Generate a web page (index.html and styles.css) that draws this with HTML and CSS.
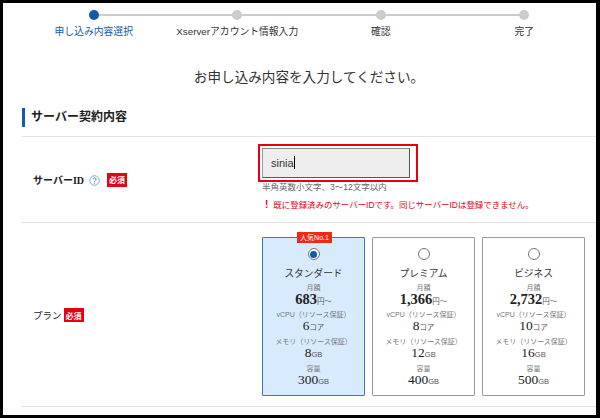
FILE: index.html
```html
<!DOCTYPE html>
<html lang="ja">
<head>
    <meta charset="UTF-8">
    <meta name="viewport" content="width=device-width, initial-scale=1.0">
    <title>お申し込み内容</title>
    <link rel="stylesheet" href="styles.css">
</head>
<body>
    <div class="frame">
        <!-- ステップ -->
        <ol class="steps">
            <li class="step current"><span class="dot"></span>申し込み内容選択</li>
            <li class="step"><span class="dot"></span>Xserverアカウント情報入力</li>
            <li class="step"><span class="dot"></span>確認</li>
            <li class="step last"><span class="dot"></span>完了</li>
        </ol>

        <h1 class="title">お申し込み内容を入力してください。</h1>

        <h2 class="section-title">サーバー契約内容</h2>

        <!-- サーバーID -->
        <div class="row row-id">
            <div class="row-label">
                <span class="label-text">サーバーID</span>
                <svg class="help" width="11" height="11" viewBox="0 0 13 13">
                    <circle cx="6.5" cy="6.5" r="5.6" fill="none" stroke="#6d9ac6" stroke-width="1"/>
                    <path d="M4.6 5.1c0-1.1.9-1.8 1.9-1.8s1.9.7 1.9 1.7c0 1.3-1.9 1.4-1.9 2.8" fill="none" stroke="#2f6fae" stroke-width="1.1"/>
                    <rect x="6" y="9" width="1.1" height="1.2" fill="#2f6fae"/>
                </svg>
                <span class="required">必須</span>
            </div>
            <div class="row-body">
                <div class="highlight">
                    <div class="text-input">sinia<span class="caret"></span></div>
                </div>
                <p class="hint">半角英数小文字、3～12文字以内</p>
                <p class="error"><span class="error-mark">!</span>既に登録済みのサーバーIDです。同じサーバーIDは登録できません。</p>
            </div>
        </div>

        <!-- プラン -->
        <div class="row row-plan">
            <div class="row-label">
                <span class="label-text plain">プラン</span>
                <span class="required">必須</span>
            </div>
            <div class="plans">
                <div class="plan selected">
                    <span class="badge">人気No.1</span>
                    <span class="radio"></span>
                    <div class="plan-name">スタンダード</div>
                    <div class="spec-label">月額</div>
                    <div class="price">683<small>円～</small></div>
                    <div class="spec-label">vCPU（リソース保証）</div>
                    <div class="spec">6<small>コア</small></div>
                    <div class="spec-label">メモリ（リソース保証）</div>
                    <div class="spec">8<small>GB</small></div>
                    <div class="spec-label">容量</div>
                    <div class="spec">300<small>GB</small></div>
                </div>
                <div class="plan">
                    <span class="radio"></span>
                    <div class="plan-name">プレミアム</div>
                    <div class="spec-label">月額</div>
                    <div class="price">1,366<small>円～</small></div>
                    <div class="spec-label">vCPU（リソース保証）</div>
                    <div class="spec">8<small>コア</small></div>
                    <div class="spec-label">メモリ（リソース保証）</div>
                    <div class="spec">12<small>GB</small></div>
                    <div class="spec-label">容量</div>
                    <div class="spec">400<small>GB</small></div>
                </div>
                <div class="plan">
                    <span class="radio"></span>
                    <div class="plan-name">ビジネス</div>
                    <div class="spec-label">月額</div>
                    <div class="price">2,732<small>円～</small></div>
                    <div class="spec-label">vCPU（リソース保証）</div>
                    <div class="spec">10<small>コア</small></div>
                    <div class="spec-label">メモリ（リソース保証）</div>
                    <div class="spec">16<small>GB</small></div>
                    <div class="spec-label">容量</div>
                    <div class="spec">500<small>GB</small></div>
                </div>
            </div>
        </div>
    </div>
</body>
</html>
```

FILE: styles.css
```css
* {
    box-sizing: border-box;
}
body {
    margin: 0;
    background: #fff;
    font-family: "Liberation Sans", "Noto Sans CJK JP", sans-serif;
    color: #333;
}
.frame {
    width: 600px;
    height: 418px;
    border: 3px solid #000;
    border-right-width: 4px;
    padding-left: 19px;
    overflow: hidden;
}
.steps {
    display: grid;
    grid-template-columns: repeat(4, 143.5px);
    margin: 0;
    padding: 7px 0 0;
    list-style: none;
}
.step {
    position: relative;
    display: flex;
    flex-direction: column;
    align-items: center;
    gap: 5px;
    font-size: 9.8px;
    line-height: 14px;
    white-space: nowrap;
}
.step::after {
    content: "";
    position: absolute;
    top: 4px;
    left: 50%;
    width: 100%;
    height: 2px;
    background: #ccc;
}
.step.last::after {
    display: none;
}
.step.current {
    color: #0f5ca8;
}
.dot {
    position: relative;
    z-index: 1;
    width: 10px;
    height: 10px;
    border-radius: 50%;
    background: #ccc;
}
.current .dot {
    background: #0f5ca8;
}
.title {
    margin: 29px 0 0;
    font-size: 13.6px;
    line-height: 20px;
    font-weight: normal;
    text-align: center;
}
.section-title {
    margin: 20px 0 0;
    padding-left: 6px;
    height: 19px;
    border-left: 3px solid #0f5ca8;
    font-size: 12px;
    line-height: 18px;
    color: #222;
}
.row {
    display: flex;
    border-top: 1px solid #e2e2e2;
}
.row-id {
    margin-top: 9px;
    height: 86px;
    padding-top: 7px;
}
.row-plan {
    height: 185px;
    padding-top: 14px;
    border-bottom: 1px solid #e2e2e2;
}
.row-label {
    display: flex;
    align-items: center;
    gap: 4px;
    width: 240px;
    padding-left: 11px;
    font-size: 10px;
    color: #222;
}
.row-id .row-label {
    height: 71px;
}
.row-plan .row-label {
    height: 156px;
    gap: 2px;
    font-size: 9.5px;
}
.label-text {
    font-family: "Liberation Serif", "Noto Sans CJK JP", serif;
    font-weight: bold;
}
.label-text.plain {
    font-family: "Liberation Sans", "Noto Sans CJK JP", sans-serif;
    font-weight: normal;
}
.help {
    margin: 2px 3px 0 1px;
}
.required {
    display: flex;
    align-items: center;
    justify-content: center;
    width: 20px;
    height: 14px;
    background: #e60012;
    color: #fff;
    font-size: 8px;
    font-weight: bold;
}
.highlight {
    width: 160px;
    height: 38px;
    margin-left: -4px;
    padding: 2px;
    border: 2px solid #e60012;
}
.text-input {
    width: 148px;
    height: 30px;
    padding-left: 8px;
    border: 1px solid #555;
    border-top-color: #888;
    border-left-color: #999;
    background: #eee;
    font-size: 11px;
    line-height: 28px;
    color: #333;
}
.caret {
    display: inline-block;
    width: 1px;
    height: 13px;
    margin-bottom: -2px;
    background: #000;
}
.hint {
    margin: -1px 0 0;
    font-size: 8.5px;
    line-height: 12px;
    color: #666;
}
.error {
    margin: 6px 0 0;
    font-size: 8.45px;
    line-height: 12px;
    color: #e60012;
    white-space: nowrap;
}
.error-mark {
    margin: 0 5px 0 3px;
    font-size: 10px;
    font-weight: bold;
}
.plans {
    display: flex;
    gap: 7px;
}
.plan {
    position: relative;
    display: flex;
    flex-direction: column;
    align-items: center;
    width: 103px;
    height: 159px;
    padding-top: 10px;
    border: 1px solid #999;
    border-radius: 1px;
    background: #fff;
}
.plan.selected {
    border-color: #3d78b4;
    background: #d8ebfd;
}
.badge {
    position: absolute;
    top: -6px;
    left: 34px;
    width: 35px;
    background: #f0291a;
    color: #fff;
    font-size: 7px;
    line-height: 11px;
    text-align: center;
    white-space: nowrap;
}
.radio {
    width: 12px;
    height: 12px;
    border: 1px solid #777;
    border-radius: 50%;
    background: #fff;
}
.selected .radio {
    position: relative;
}
.selected .radio::after {
    content: "";
    position: absolute;
    top: 1.5px;
    left: 1.5px;
    width: 7px;
    height: 7px;
    border-radius: 50%;
    background: #0f5ca8;
}
.plan-name {
    margin: 7px 0 2px;
    font-size: 9.7px;
    line-height: 14px;
    color: #333;
}
.spec-label {
    font-size: 7px;
    line-height: 9px;
    color: #777;
    white-space: nowrap;
}
.price,
.spec {
    height: 18px;
    font-family: "Liberation Serif", "Noto Sans CJK JP", serif;
    line-height: 14px;
    color: #222;
}
.price {
    font-weight: bold;
    font-size: 14.5px;
}
.spec {
    font-size: 13.5px;
}
.plan small {
    font-family: "Liberation Sans", "Noto Sans CJK JP", sans-serif;
    font-weight: normal;
    font-size: 7.5px;
    color: #555;
}
```
